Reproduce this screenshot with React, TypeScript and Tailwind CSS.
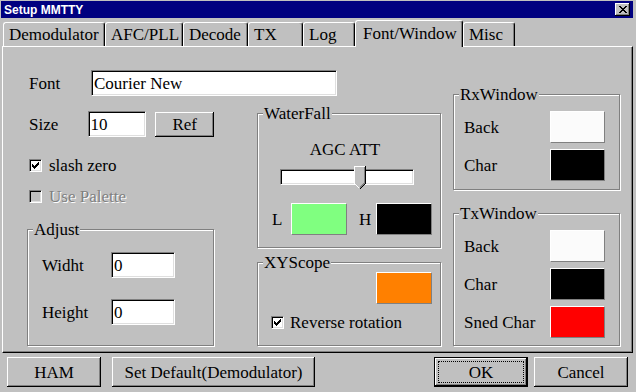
import type { ReactNode } from 'react';

const sunken =
  'border border-t-[#808080] border-l-[#808080] border-r-white border-b-white shadow-[inset_1px_1px_0_#000,inset_-1px_-1px_0_#dfdfdf]';
const raised = 'bg-[#c0c0c0] shadow-[inset_-1px_-1px_0_#000,inset_1px_1px_0_#fff,inset_-2px_-2px_0_#808080]';
const swatch = 'border border-t-white border-l-white border-r-[#808080] border-b-[#808080]';

function Group({ title, className, children }: { title: string; className: string; children?: ReactNode }) {
  return (
    <div className={`relative border border-[#808080] shadow-[inset_1px_1px_0_#fff,1px_1px_0_#fff] flex flex-col ${className}`}>
      <span className="absolute -top-[9px] left-[5px] bg-[#c0c0c0] px-px leading-[17px]">{title}</span>
      {children}
    </div>
  );
}

function CheckBox({ checked, disabled }: { checked?: boolean; disabled?: boolean }) {
  return (
    <span className={`w-[13px] h-[13px] shrink-0 flex items-center justify-center ${sunken} ${disabled ? 'bg-[#c0c0c0]' : 'bg-white'}`}>
      {checked && (
        <svg width="7" height="7" viewBox="0 0 7 7" shapeRendering="crispEdges">
          <path d="M0 2h1v3H0zM1 3h1v3H1zM2 4h1v3H2zM3 3h1v3H3zM4 2h1v3H4zM5 1h1v3H5zM6 0h1v3H6z" fill="#000" />
        </svg>
      )}
    </span>
  );
}

function Tab({ label, width, selected }: { label: string; width: string; selected?: boolean }) {
  if (selected) {
    return (
      <div
        className={`${width} h-[27px] -mb-px bg-[#c0c0c0] flex items-center pl-[7px] pb-[2px] border-t border-l border-r border-t-white border-l-white border-r-black shadow-[inset_-1px_0_0_#808080] rounded-t-[3px]`}
      >
        {label}
      </div>
    );
  }
  return (
    <div
      className={`${width} h-[24px] flex items-center pl-[5px] border-t border-l border-r border-t-white border-l-white border-r-black shadow-[inset_-1px_0_0_#808080] rounded-t-[3px]`}
    >
      {label}
    </div>
  );
}

function ColorRow({ label, color, first }: { label: string; color: string; first?: boolean }) {
  return (
    <div className={`h-[32px] flex items-center justify-between pl-[10px] pr-[14px] ${first ? '' : 'mt-[6px]'}`}>
      <span>{label}</span>
      <span className={`w-[55px] h-[32px] ${swatch} ${color}`} />
    </div>
  );
}

export default function App() {
  return (
    <div className="w-[636px] h-[392px] bg-[#c0c0c0] pl-px pt-px pr-[3px] flex flex-col overflow-hidden font-['Liberation_Serif'] text-[17px] leading-[17px] text-black">
      {/* title bar */}
      <div className="h-[17px] bg-[#000080] flex items-center justify-between pl-[3px] pr-[3px]">
        <span className="font-['Liberation_Sans'] font-bold text-[12px] leading-[12px] text-white">Setup MMTTY</span>
        <span className={`w-[15px] h-[13px] flex items-center justify-center ${raised}`}>
          <svg width="8" height="7" viewBox="0 0 8 7" shapeRendering="crispEdges">
            <path
              d="M0 0h2v1H0zM6 0h2v1H6zM1 1h2v1H1zM5 1h2v1H5zM2 2h4v1H2zM3 3h2v1H3zM2 4h4v1H2zM1 5h2v1H1zM5 5h2v1H5zM0 6h2v1H0zM6 6h2v1H6z"
              fill="#000"
            />
          </svg>
        </span>
      </div>

      {/* tabs */}
      <div className="h-[28px] flex items-end pl-[2px] relative z-10">
        <Tab label="Demodulator" width="w-[102px]" />
        <Tab label="AFC/PLL" width="w-[78px]" />
        <Tab label="Decode" width="w-[65px]" />
        <Tab label="TX" width="w-[55px]" />
        <Tab label="Log" width="w-[52px]" />
        <Tab label="Font/Window" width="w-[108px]" selected />
        <Tab label="Misc" width="w-[52px]" />
      </div>

      {/* page */}
      <div className="ml-px h-[307px] flex border border-t-white border-l-white border-r-black border-b-black shadow-[inset_-1px_-1px_0_#808080]">
        <div className="ml-[24px] w-[414px] flex flex-col">
          <div className="mt-[23px] h-[26px] flex items-center">
            <span className="w-[64px] pl-[2px]">Font</span>
            <div className={`w-[246px] h-[26px] bg-white pl-[2px] flex items-center ${sunken}`}>Courier New</div>
          </div>

          <div className="mt-[15px] flex">
            <div className="w-[187px] flex flex-col">
              <div className="h-[26px] flex items-center">
                <span className="w-[64px] pl-[2px]">Size</span>
                <div className={`w-[62px] h-[26px] bg-white pl-[2px] flex items-center ${sunken}`}>10</div>
                <button className={`ml-[9px] w-[62px] h-[25px] ${raised}`}>Ref</button>
              </div>
              <div className="mt-[22px] h-[13px] flex items-center pl-[2px] gap-[7px]">
                <CheckBox checked />
                <span>slash zero</span>
              </div>
              <div className="mt-[18px] h-[13px] flex items-center pl-[2px] gap-[7px]">
                <CheckBox disabled />
                <span className="text-[#808080] [text-shadow:1px_1px_0_#fff]">Use Palette</span>
              </div>
              <Group title="Adjust" className="mt-[26px] w-[187px] h-[117px] pl-[14px] pt-[22px]">
                <div className="h-[26px] flex items-center">
                  <span className="w-[69px]">Widht</span>
                  <div className={`w-[64px] h-[26px] bg-white pl-[2px] flex items-center ${sunken}`}>0</div>
                </div>
                <div className="mt-[21px] h-[26px] flex items-center">
                  <span className="w-[69px]">Height</span>
                  <div className={`w-[64px] h-[26px] bg-white pl-[2px] flex items-center ${sunken}`}>0</div>
                </div>
              </Group>
            </div>

            <div className="ml-[43px] w-[184px] flex flex-col">
              <Group title="WaterFall" className="mt-[2px] h-[135px]">
                <div className="mt-[27px] text-center pr-[8px]">AGC ATT</div>
                <div className="mt-[8px] ml-[22px] w-[134px] h-[23px] relative">
                  <div className={`mt-[3px] h-[16px] w-full bg-white ${sunken}`} />
                  <svg className="absolute left-[74px] top-0" width="12" height="23" viewBox="0 0 12 23" shapeRendering="crispEdges">
                    <polygon points="0,0 12,0 12,17 6,23 0,17" fill="#c0c0c0" />
                    <path d="M0.5 17V0.5H11" stroke="#fff" fill="none" />
                    <path d="M11.5 0V17.5L6 23" stroke="#000" fill="none" />
                    <path d="M10.5 1V17L6 21.5" stroke="#808080" fill="none" />
                    <path d="M0.5 17.5L5.5 22.5" stroke="#fff" fill="none" />
                  </svg>
                </div>
                <div className="mt-[14px] h-[32px] flex items-center">
                  <span className="ml-[14px] w-[19px]">L</span>
                  <span className={`w-[56px] h-[32px] bg-[#80ff80] ${swatch}`} />
                  <span className="ml-[12px] w-[17px]">H</span>
                  <span className={`w-[56px] h-[32px] bg-black ${swatch}`} />
                </div>
              </Group>
              <Group title="XYScope" className="mt-[14px] h-[84px]">
                <span className={`self-end mr-[8px] mt-[9px] w-[56px] h-[32px] bg-[#ff8000] ${swatch}`} />
                <div className="mt-[12px] ml-[13px] h-[13px] flex items-center gap-[6px]">
                  <CheckBox checked />
                  <span>Reverse rotation</span>
                </div>
              </Group>
            </div>
          </div>
        </div>

        <div className="ml-[12px] w-[167px] flex flex-col">
          <Group title="RxWindow" className="mt-[47px] h-[96px] pt-[16px]">
            <ColorRow label="Back" color="bg-[#fbfbfb]" first />
            <ColorRow label="Char" color="bg-black" />
          </Group>
          <Group title="TxWindow" className="mt-[23px] h-[133px] pt-[16px]">
            <ColorRow label="Back" color="bg-[#fbfbfb]" first />
            <ColorRow label="Char" color="bg-black" />
            <ColorRow label="Sned Char" color="bg-[#ff0000]" />
          </Group>
        </div>
      </div>

      {/* buttons */}
      <div className="mt-[4px] h-[30px] flex justify-between pl-[6px] pr-[5px]">
        <div className="flex">
          <button className={`w-[94px] h-[30px] ${raised}`}>HAM</button>
          <button className={`ml-[11px] w-[203px] h-[30px] ${raised}`}>Set Default(Demodulator)</button>
        </div>
        <div className="flex">
          <button className={`relative w-[94px] h-[30px] border border-black ${raised}`}>
            <span className="absolute inset-[3px] border border-dotted border-black" />
            OK
          </button>
          <button className={`ml-[6px] w-[94px] h-[30px] ${raised}`}>Cancel</button>
        </div>
      </div>
    </div>
  );
}
